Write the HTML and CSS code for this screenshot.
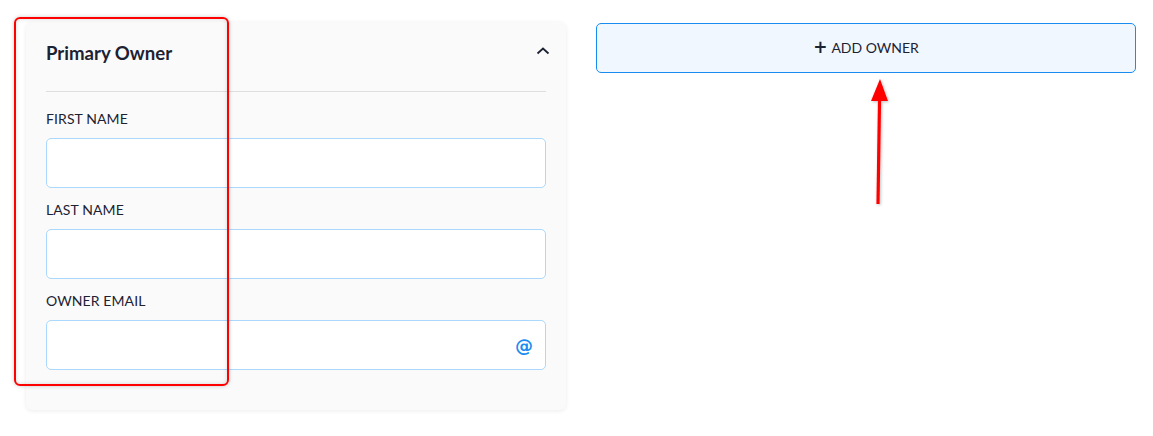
FILE: index.html
```html
<!DOCTYPE html>
<html>
<head>
<meta charset="utf-8">
<link rel="stylesheet" href="styles.css">
</head>
<body>
<div class="page">
  <section class="card">
    <div class="card-head">
      <h2 class="card-title">Primary Owner</h2>
      <svg class="chevron" width="14" height="10" viewBox="0 0 14 10"><path d="M1.5 7.5 L7 2.5 L12.5 7.5" fill="none" stroke="#1d2233" stroke-width="1.8"/></svg>
    </div>
    <div class="divider"></div>
    <div class="fields">
      <div class="field">
        <label class="label">FIRST NAME</label>
        <div class="input"></div>
      </div>
      <div class="field">
        <label class="label">LAST NAME</label>
        <div class="input"></div>
      </div>
      <div class="field">
        <label class="label">OWNER EMAIL</label>
        <div class="input input-email"><span class="at">@</span></div>
      </div>
    </div>
  </section>
  <div class="side">
    <button class="add-btn"><span class="plus">+</span>ADD OWNER</button>
  </div>
</div>
<div class="highlight"></div>
<svg class="arrow" width="40" height="140" viewBox="0 0 40 140">
  <defs>
    <filter id="sh" x="-50%" y="-20%" width="200%" height="140%"><feDropShadow dx="1" dy="1" stdDeviation="1.5" flood-color="#000" flood-opacity="0.25"/></filter>
  </defs>
  <g filter="url(#sh)">
    <line x1="18" y1="125" x2="19.5" y2="22" stroke="#ff0000" stroke-width="3.2"/>
    <polygon points="20,0 28,22 11,22" fill="#ff0000"/>
  </g>
</svg>
</body>
</html>
```
FILE: styles.css
```css
* { box-sizing: border-box; }
html, body { margin: 0; padding: 0; background: #fff; }
body {
  font-family: "Lato", "Noto Sans", sans-serif;
  color: #1d2233;
  width: 1153px;
  height: 436px;
  position: relative;
  overflow: hidden;
}
.page {
  display: flex;
  align-items: flex-start;
  gap: 30px;
  padding: 22px 0 0 26px;
}
.card {
  width: 540px;
  background: #fafafa;
  border-radius: 6px;
  box-shadow: 0 1px 4px rgba(0,0,0,0.08);
  padding: 0 20px 40px 20px;
}
.card-head {
  height: 69px;
  display: flex;
  align-items: flex-start;
  justify-content: space-between;
  padding-top: 20px;
}
.card-title {
  margin: 0;
  font-size: 18.6px;
  font-weight: 700;
  line-height: 22px;
}
.chevron { margin-top: 4px; margin-right: -4px; }
.divider { height: 1px; background: #dedede; }
.fields {
  display: flex;
  flex-direction: column;
  gap: 13px;
  padding-top: 18px;
}
.field { display: flex; flex-direction: column; gap: 10px; }
.label {
  font-size: 14px;
  line-height: 18px;
  color: #1d2233;
  letter-spacing: 0.1px;
}
.input {
  height: 50px;
  background: #fff;
  border: 1px solid #aad8ff;
  border-radius: 5px;
}
.input-email {
  display: flex;
  align-items: center;
  justify-content: flex-end;
  padding-right: 12px;
}
.at {
  color: #1a8cf0;
  font-weight: 700;
  font-size: 18px;
  font-family: "DejaVu Sans", sans-serif;
  margin-top: 1px;
}
.side { width: 540px; padding-top: 1px; }
.add-btn {
  width: 540px;
  height: 50px;
  background: #f0f7fe;
  border: 1px solid #1a8cf0;
  border-radius: 5px;
  font-family: "Lato", "Noto Sans", sans-serif;
  font-size: 14px;
  color: #1d2233;
  display: flex;
  align-items: center;
  justify-content: center;
  padding: 0 0 2px 0;
}
.plus {
  font-family: "DejaVu Sans", sans-serif;
  font-weight: 700;
  font-size: 17px;
  margin-right: 4px;
  line-height: 1;
}
.highlight {
  position: absolute;
  left: 14px;
  top: 17px;
  width: 215px;
  height: 369px;
  border: 2px solid #ff0000;
  border-radius: 6px;
  box-shadow: 0 0 4px rgba(0,0,0,0.2), inset 0 0 4px rgba(0,0,0,0.15);
}
.arrow {
  position: absolute;
  left: 860px;
  top: 79px;
}
```
